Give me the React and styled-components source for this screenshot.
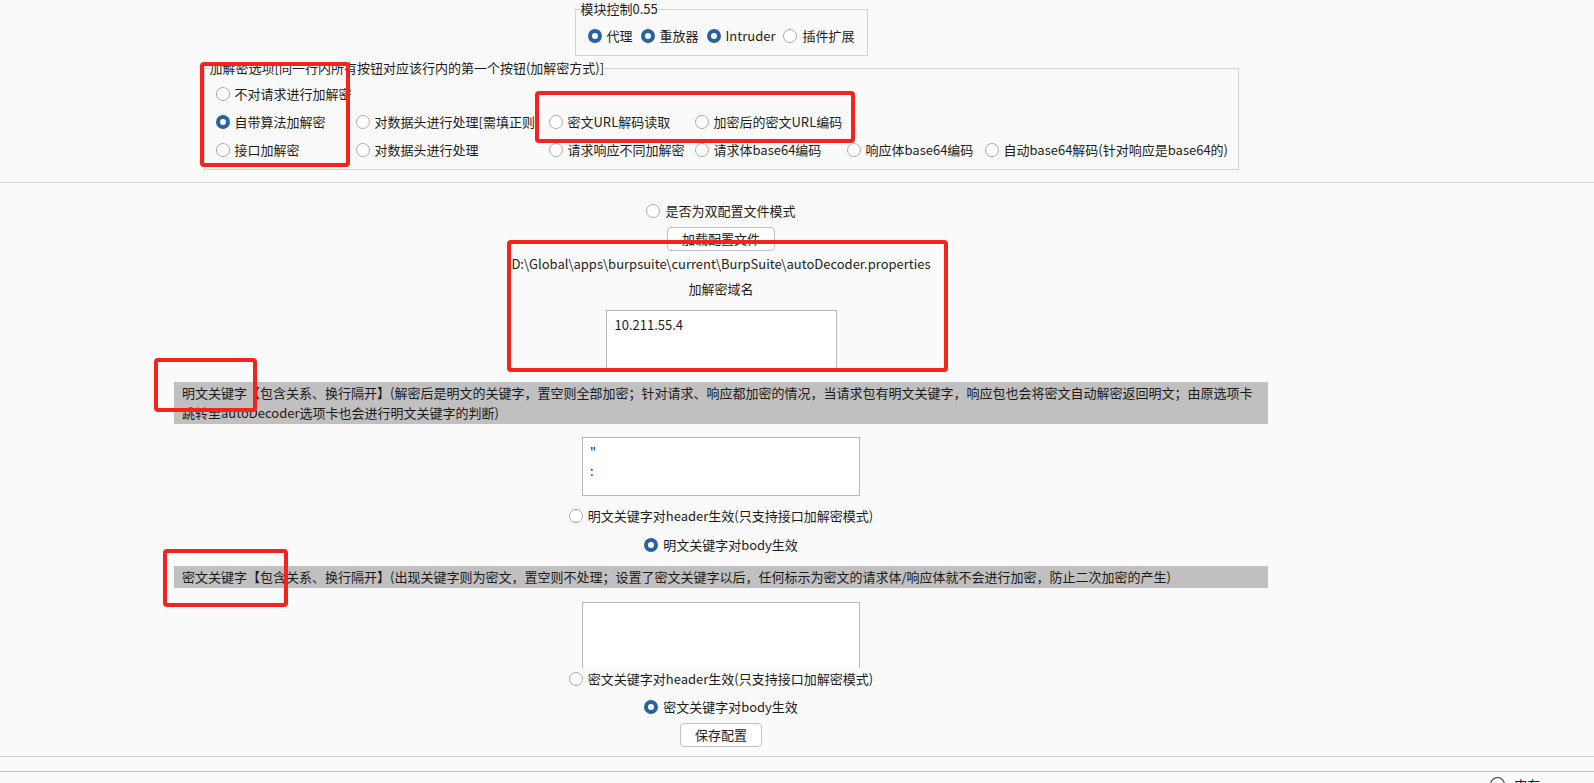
import React from "react";
import styled, { createGlobalStyle } from "styled-components";

const GlobalStyle = createGlobalStyle`
  html, body {
    margin: 0;
    padding: 0;
    background-color: #fafafa;
    overflow: hidden;
  }
  body {
    font-family: "Noto Sans CJK SC", "Noto Sans", sans-serif;
    font-size: 13px;
    color: #1c1c1c;
  }
`;

const Page = styled.div`
  position: relative;
  width: 1594px;
  height: 783px;
  overflow: hidden;
  background-color: #fafafa;
`;

const Column = styled.div`
  width: 1442px;
  display: flex;
  flex-direction: column;
  align-items: center;
`;

const Group = styled.fieldset`
  box-sizing: border-box;
  min-width: 0;
  width: ${(p) => p.$width}px;
  margin: ${(p) => p.$mt || 0}px 0 0 0;
  padding: ${(p) => p.$pad};
  border: 1px solid #d3d3d3;
  border-radius: 0;
`;

const GroupTitle = styled.legend`
  padding: 0;
  margin: 0;
  font-size: 13px;
  line-height: 18px;
  color: #1c1c1c;
`;

const FlowRow = styled.div`
  display: flex;
  justify-content: center;
  align-items: center;
  gap: ${(p) => p.$gap || 9}px;
  height: ${(p) => p.$h || 21}px;
  margin-top: ${(p) => p.$mt || 0}px;
  position: relative;
  background-color: #fafafa;
`;

const OptionGrid = styled.div`
  display: grid;
  grid-template-columns: 140px 193px 146px 152px 138px 1fr;
  grid-auto-rows: 28px;
  align-items: center;
  margin: 3px 0 0 6px;
`;

const Cell = styled.div`
  display: flex;
  align-items: center;
  overflow: ${(p) => (p.$clip ? "hidden" : "visible")};
  white-space: nowrap;
  min-width: 0;
`;

const RadioWrap = styled.label`
  display: inline-flex;
  align-items: center;
  gap: 5px;
  white-space: nowrap;
  line-height: 20px;
`;

const Circle = styled.span`
  box-sizing: border-box;
  flex: none;
  width: 14px;
  height: 14px;
  border-radius: 50%;
  background-color: #ffffff;
  border: ${(p) => (p.$on ? "4px solid #2a62a0" : "1px solid #ababab")};
`;

const Radio = ({ on, children }) => (
  <RadioWrap>
    <Circle $on={on} />
    <span>{children}</span>
  </RadioWrap>
);

const Divider = styled.div`
  width: 100%;
  height: 1px;
  margin-top: ${(p) => p.$mt}px;
  background-color: ${(p) => p.$color || "#d5d5d5"};
`;

const Button = styled.button`
  box-sizing: border-box;
  height: 24px;
  margin-top: ${(p) => p.$mt}px;
  padding: 0 14px;
  border: 1px solid #c2c2c2;
  border-radius: 4px;
  background-color: #ffffff;
  font-family: inherit;
  font-size: 13px;
  color: #1c1c1c;
  line-height: 20px;
`;

const TextLine = styled.div`
  margin-top: ${(p) => p.$mt}px;
  line-height: 18px;
  white-space: nowrap;
`;

const TextBox = styled.textarea`
  box-sizing: border-box;
  display: block;
  width: ${(p) => p.$w}px;
  height: ${(p) => p.$h}px;
  margin-top: ${(p) => p.$mt}px;
  padding: 4px ${(p) => p.$px}px;
  border: 1px solid #b8b8b8;
  border-bottom: ${(p) => (p.$open ? "none" : "1px solid #b8b8b8")};
  background-color: #ffffff;
  font-family: "Noto Sans CJK SC", "Noto Sans", sans-serif;
  font-size: 13px;
  line-height: 19px;
  color: #1c1c1c;
  resize: none;
  overflow: hidden;
  outline: none;
`;

const NoteBar = styled.div`
  box-sizing: border-box;
  width: 1094px;
  margin-top: ${(p) => p.$mt}px;
  padding: 1px 8px;
  background-color: #c0c0c0;
  line-height: 20px;
  color: #1a1a1a;
`;

const NoteLine = styled.div`
  white-space: nowrap;
  overflow: hidden;
`;

const StatusBar = styled.div`
  display: flex;
  align-items: flex-start;
  gap: 9px;
  padding: 4px 0 0 1490px;
  line-height: 18px;
`;

const StatusIcon = styled.span`
  box-sizing: border-box;
  margin-top: 1px;
  width: 16px;
  height: 16px;
  border-radius: 50%;
  border: 1.5px solid #333333;
`;

const Mark = styled.div`
  position: absolute;
  box-sizing: border-box;
  border: 4px solid #f4231b;
  border-radius: 4px;
  pointer-events: none;
`;

const marks = [
  { left: 200, top: 62, width: 150, height: 105 },
  { left: 535, top: 91, width: 320, height: 52 },
  { left: 507, top: 240, width: 441, height: 132 },
  { left: 154, top: 358, width: 103, height: 54 },
  { left: 163, top: 549, width: 125, height: 58 },
];

export default function App() {
  return (
    <Page>
      <GlobalStyle />
      <Column>
        <Group $width={293} $pad="0 5px 9px 5px">
          <GroupTitle>模块控制0.55</GroupTitle>
          <FlowRow $mt={7} $gap={8}>
            <Radio on>代理</Radio>
            <Radio on>重放器</Radio>
            <Radio on>Intruder</Radio>
            <Radio>插件扩展</Radio>
          </FlowRow>
        </Group>
        <Group $width={1035} $mt={3} $pad="0 5px 5px 5px">
          <GroupTitle>加解密选项[同一行内所有按钮对应该行内的第一个按钮(加解密方式)]</GroupTitle>
          <OptionGrid>
            <Cell>
              <Radio>不对请求进行加解密</Radio>
            </Cell>
            <Cell />
            <Cell />
            <Cell />
            <Cell />
            <Cell />
            <Cell>
              <Radio on>自带算法加解密</Radio>
            </Cell>
            <Cell $clip>
              <Radio>对数据头进行处理[需填正则]</Radio>
            </Cell>
            <Cell>
              <Radio>密文URL解码读取</Radio>
            </Cell>
            <Cell>
              <Radio>加密后的密文URL编码</Radio>
            </Cell>
            <Cell />
            <Cell />
            <Cell>
              <Radio>接口加解密</Radio>
            </Cell>
            <Cell>
              <Radio>对数据头进行处理</Radio>
            </Cell>
            <Cell>
              <Radio>请求响应不同加解密</Radio>
            </Cell>
            <Cell>
              <Radio>请求体base64编码</Radio>
            </Cell>
            <Cell>
              <Radio>响应体base64编码</Radio>
            </Cell>
            <Cell>
              <Radio>自动base64解码(针对响应是base64的)</Radio>
            </Cell>
          </OptionGrid>
        </Group>
      </Column>

      <Divider $mt={12} />

      <Column>
        <FlowRow $mt={17}>
          <Radio>是否为双配置文件模式</Radio>
        </FlowRow>
        <Button $mt={6}>加载配置文件</Button>
        <TextLine $mt={4}>
          D:\Global\apps\burpsuite\current\BurpSuite\autoDecoder.properties
        </TextLine>
        <TextLine $mt={7}>加解密域名</TextLine>
        <TextBox $w={231} $h={61} $mt={12} $px={8} defaultValue="10.211.55.4" readOnly />

        <NoteBar $mt={11}>
          <NoteLine>
            明文关键字【包含关系、换行隔开】(解密后是明文的关键字，置空则全部加密；针对请求、响应都加密的情况，当请求包有明文关键字，响应包也会将密文自动解密返回明文；由原选项卡
          </NoteLine>
          <NoteLine>跳转至autoDecoder选项卡也会进行明文关键字的判断)</NoteLine>
        </NoteBar>
        <TextBox $w={278} $h={59} $mt={13} $px={7} defaultValue={'"\n:'} readOnly />
        <FlowRow $mt={9}>
          <Radio>明文关键字对header生效(只支持接口加解密模式)</Radio>
        </FlowRow>
        <FlowRow $mt={8}>
          <Radio on>明文关键字对body生效</Radio>
        </FlowRow>

        <NoteBar $mt={11}>
          <NoteLine>
            密文关键字【包含关系、换行隔开】(出现关键字则为密文，置空则不处理；设置了密文关键字以后，任何标示为密文的请求体/响应体就不会进行加密，防止二次加密的产生)
          </NoteLine>
        </NoteBar>
        <TextBox $w={278} $h={66} $mt={14} $px={7} $open defaultValue="" readOnly />
        <FlowRow>
          <Radio>密文关键字对header生效(只支持接口加解密模式)</Radio>
        </FlowRow>
        <FlowRow $mt={7}>
          <Radio on>密文关键字对body生效</Radio>
        </FlowRow>
        <Button $mt={6}>保存配置</Button>
      </Column>

      <Divider $mt={9} $color="#cfcfcf" />
      <Divider $mt={14} $color="#bdbdbd" />
      <StatusBar>
        <StatusIcon />
        <span>内存: 358.5MB</span>
      </StatusBar>

      {marks.map((m, i) => (
        <Mark key={i} style={m} />
      ))}
    </Page>
  );
}
